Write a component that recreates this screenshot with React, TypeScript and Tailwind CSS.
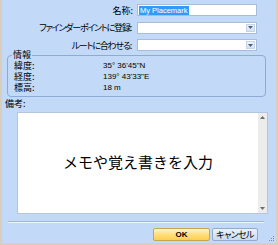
import React from "react";

// Placemark properties dialog (Office 2007 blue theme)
function ComboArrow() {
  return (
    <div className="m-px flex w-[9px] items-center justify-center border border-[#c3d3e8] bg-gradient-to-b from-[#eef3fa] to-[#d5e1f1]">
      <svg width="5" height="3" viewBox="0 0 5 3">
        <path d="M0 0h5L2.5 3z" fill="#4f5f7a" />
      </svg>
    </div>
  );
}

function Combo() {
  return (
    <div className="flex h-[12px] justify-end border border-[#a9bdd8] bg-white">
      <ComboArrow />
    </div>
  );
}

const INFO = [
  { label: "緯度:", value: "35° 36'45\"N" },
  { label: "経度:", value: "139° 43'33\"E" },
  { label: "標高:", value: "18 m" },
];

export default function App() {
  return (
    <div className="relative flex h-[245px] w-[278px] flex-col border-x-2 border-b-2 border-[#d8cebb] bg-[#c2daf8] font-['Noto_Sans_CJK_JP',sans-serif] text-[9px] leading-none text-black [font-feature-settings:'palt']">
      <div className="grid grid-cols-[131px_120px] items-center gap-x-[4px] gap-y-[5.5px] pt-[4px]">
        <span className="text-right">名称:</span>
        <div className="flex h-[12px] items-center border border-[#a9bdd8] bg-white pl-px">
          <span className="bg-[#3399ff] px-px font-['Liberation_Sans',sans-serif] text-[7.5px] leading-[9px] text-white">
            My Placemark
          </span>
        </div>
        <span className="pr-[2px] text-right tracking-[-1.2px]">ファインダーポイントに登録:</span>
        <Combo />
        <span className="pr-[2px] text-right tracking-[-1.2px]">ルートに合わせる:</span>
        <Combo />
      </div>

      <fieldset className="mt-[-1px] ml-[5px] mr-[10px] rounded-[4px] border border-[#8eabd3] px-[4px] pb-[3px]">
        <legend className="px-px leading-[10px]">情報</legend>
        <div className="grid grid-cols-[89px_1fr] pl-[2px]">
          {INFO.map((r) => (
            <React.Fragment key={r.label}>
              <span className="flex h-[11px] items-center leading-[9px]">{r.label}</span>
              <span className="flex h-[11px] items-center font-['Liberation_Sans',sans-serif] text-[8px] leading-[9px]">
                {r.value}
              </span>
            </React.Fragment>
          ))}
        </div>
      </fieldset>

      <span className="ml-[3px] mt-[2px] leading-[10px]">備考:</span>

      <div className="ml-[15px] mr-[8px] mt-[3px] flex h-[102px] border border-[#b4c6de] bg-white">
        <div className="flex flex-1 items-center justify-center pb-[4px] text-[15px] [font-feature-settings:normal]">
          メモや覚え書きを入力
        </div>
        <div className="flex w-[9px] flex-col items-center justify-between bg-[#ececec] py-[3px]">
          <svg width="5" height="3" viewBox="0 0 5 3">
            <path d="M2.5 0L5 3H0z" fill="#6d6d6d" />
          </svg>
          <svg width="5" height="3" viewBox="0 0 5 3">
            <path d="M0 0h5L2.5 3z" fill="#6d6d6d" />
          </svg>
        </div>
      </div>

      <div className="ml-[6px] mr-[12px] mt-[7px] h-[2px] border-t border-b border-t-[#a3b6cf] border-b-[#eef4fc]" />

      <div className="mr-[18px] mt-[5px] flex justify-end gap-[2px]">
        <button className="flex h-[13px] w-[57px] items-center justify-center rounded-[2px] border border-[#c6a458] bg-gradient-to-b from-[#fff4c8] via-[#ffdf7d] to-[#ffcf4c] font-['Liberation_Sans',sans-serif] text-[8px] font-bold">
          OK
        </button>
        <button className="flex h-[13px] w-[46px] items-center justify-center rounded-[2px] border border-[#92aacb] bg-gradient-to-b from-[#eaf2fc] to-[#c8dbf3] tracking-[-0.6px]">
          キャンセル
        </button>
      </div>

      <svg className="absolute bottom-[1px] right-[1px]" width="6" height="6" viewBox="0 0 6 6">
        <rect x="4" y="0" width="1" height="1" fill="#7b8aa0" />
        <rect x="2" y="2" width="1" height="1" fill="#7b8aa0" />
        <rect x="4" y="2" width="1" height="1" fill="#7b8aa0" />
        <rect x="0" y="4" width="1" height="1" fill="#7b8aa0" />
        <rect x="2" y="4" width="1" height="1" fill="#7b8aa0" />
        <rect x="4" y="4" width="1" height="1" fill="#7b8aa0" />
      </svg>
    </div>
  );
}
